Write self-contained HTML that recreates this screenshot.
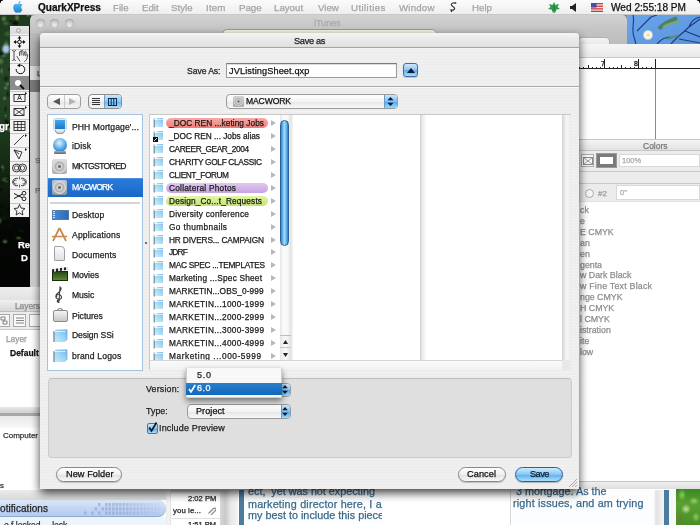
<!DOCTYPE html>
<html><head><meta charset="utf-8">
<style>
*{margin:0;padding:0;box-sizing:border-box}
html,body{width:700px;height:525px;overflow:hidden;background:#8a8a8a;font-family:"Liberation Sans",sans-serif;color:#000}
.a{position:absolute}
.t{position:absolute;white-space:nowrap;line-height:1;-webkit-text-stroke:.25px currentColor;will-change:transform}
</style></head><body>
<div class="a" style="left:0;top:0;width:700px;height:525px;overflow:hidden">

<!-- desktop left photo -->
<div class="a" style="left:0px;top:15px;width:31px;height:272px;background:radial-gradient(ellipse 5px 6px at 6px 34px,#a8c4e8 40%,transparent),radial-gradient(ellipse 3.8px 3.9px at 6.2px 63.7px,rgba(14,26,12,.9),transparent),radial-gradient(ellipse 2.7px 2.1px at 28.2px 0.2px,rgba(120,160,96,.75),transparent),radial-gradient(ellipse 3.6px 2.1px at 18.5px 223.0px,rgba(66,110,52,.9),transparent),radial-gradient(ellipse 4.3px 3.1px at 13.5px 106.0px,rgba(4,8,4,.85),transparent),radial-gradient(ellipse 2.5px 4.2px at 13.5px 175.9px,rgba(14,26,12,.9),transparent),radial-gradient(ellipse 3.4px 1.9px at 3.0px 167.2px,rgba(8,16,8,.9),transparent),radial-gradient(ellipse 3.3px 4.0px at 6.2px 28.8px,rgba(80,126,62,.9),transparent),radial-gradient(ellipse 1.5px 3.1px at 11.1px 29.9px,rgba(4,8,4,.85),transparent),radial-gradient(ellipse 1.6px 1.7px at 10.0px 114.5px,rgba(96,140,76,.85),transparent),radial-gradient(ellipse 2.4px 1.9px at 11.9px 186.8px,rgba(96,140,76,.85),transparent),radial-gradient(ellipse 3.6px 2.3px at 24.2px 158.1px,rgba(96,140,76,.85),transparent),radial-gradient(ellipse 1.6px 1.9px at 20.3px 206.1px,rgba(4,8,4,.85),transparent),radial-gradient(ellipse 3.8px 3.2px at 2.2px 203.7px,rgba(14,26,12,.9),transparent),radial-gradient(ellipse 3.9px 4.1px at 15.3px 63.4px,rgba(80,126,62,.9),transparent),radial-gradient(ellipse 4.4px 3.5px at 7.6px 18.9px,rgba(66,110,52,.9),transparent),radial-gradient(ellipse 2.4px 1.9px at 24.2px 111.1px,rgba(66,110,52,.9),transparent),radial-gradient(ellipse 3.2px 1.9px at 9.5px 210.0px,rgba(8,16,8,.9),transparent),radial-gradient(ellipse 3.4px 3.7px at 13.1px 82.3px,rgba(4,8,4,.85),transparent),radial-gradient(ellipse 3.4px 2.8px at 5.0px 226.6px,rgba(80,126,62,.9),transparent),radial-gradient(ellipse 3.9px 1.8px at 16.5px 92.5px,rgba(120,160,96,.75),transparent),radial-gradient(ellipse 2.0px 3.0px at 19.9px 102.6px,rgba(8,16,8,.9),transparent),radial-gradient(ellipse 1.6px 4.0px at 1.6px 56.0px,rgba(96,140,76,.85),transparent),radial-gradient(ellipse 4.3px 1.7px at 7.3px 164.8px,rgba(8,16,8,.9),transparent),radial-gradient(ellipse 3.2px 4.3px at 1.0px 39.0px,rgba(4,8,4,.85),transparent),radial-gradient(ellipse 2.9px 3.5px at 30.2px 99.0px,rgba(96,140,76,.85),transparent),radial-gradient(ellipse 4.3px 3.4px at 5.1px 165.1px,rgba(80,126,62,.9),transparent),radial-gradient(ellipse 2.3px 3.7px at 21.1px 162.5px,rgba(120,160,96,.75),transparent),radial-gradient(ellipse 3.4px 4.2px at 0.8px 46.2px,rgba(96,140,76,.85),transparent),radial-gradient(ellipse 3.7px 2.0px at 10.1px 180.6px,rgba(8,16,8,.9),transparent),radial-gradient(ellipse 4.0px 2.0px at 21.3px 215.7px,rgba(14,26,12,.9),transparent),radial-gradient(ellipse 4.3px 2.6px at 1.0px 154.6px,rgba(14,26,12,.9),transparent),radial-gradient(ellipse 4.0px 3.8px at 4.7px 202.5px,rgba(14,26,12,.9),transparent),radial-gradient(ellipse 2.6px 2.7px at 5.9px 106.2px,rgba(8,16,8,.9),transparent),radial-gradient(ellipse 4.3px 2.5px at 0.0px 174.9px,rgba(4,8,4,.85),transparent),radial-gradient(ellipse 4.2px 2.9px at 5.8px 8.5px,rgba(66,110,52,.9),transparent),radial-gradient(ellipse 2.0px 1.7px at 18.4px 119.0px,rgba(4,8,4,.85),transparent),radial-gradient(ellipse 2.8px 4.1px at 11.1px 166.2px,rgba(4,8,4,.85),transparent),radial-gradient(ellipse 3.9px 2.6px at 10.3px 54.1px,rgba(14,26,12,.9),transparent),radial-gradient(ellipse 3.4px 2.6px at 15.2px 209.6px,rgba(4,8,4,.85),transparent),radial-gradient(ellipse 3.7px 1.8px at 29.3px 195.1px,rgba(8,16,8,.9),transparent),radial-gradient(ellipse 3.1px 2.7px at 10.0px 110.5px,rgba(8,16,8,.9),transparent),radial-gradient(ellipse 2.2px 4.1px at 2.8px 153.6px,rgba(66,110,52,.9),transparent),radial-gradient(ellipse 3.5px 1.8px at 12.1px 104.3px,rgba(96,140,76,.85),transparent),radial-gradient(ellipse 3.9px 4.1px at 23.3px 58.5px,rgba(8,16,8,.9),transparent),radial-gradient(ellipse 2.3px 3.2px at 21.0px 130.8px,rgba(80,126,62,.9),transparent),radial-gradient(ellipse 1.9px 2.4px at 11.0px 112.6px,rgba(8,16,8,.9),transparent),radial-gradient(ellipse 1.8px 3.6px at 27.2px 170.7px,rgba(66,110,52,.9),transparent),radial-gradient(ellipse 1.7px 3.2px at 20.5px 127.8px,rgba(14,26,12,.9),transparent),radial-gradient(ellipse 1.7px 2.1px at 5.7px 100.7px,rgba(80,126,62,.9),transparent),radial-gradient(ellipse 4.5px 3.6px at 29.5px 148.5px,rgba(8,16,8,.9),transparent),radial-gradient(ellipse 4.0px 2.2px at 12.6px 15.8px,rgba(96,140,76,.85),transparent),radial-gradient(ellipse 2.5px 2.8px at 24.5px 188.5px,rgba(8,16,8,.9),transparent),radial-gradient(ellipse 1.7px 2.2px at 10.3px 114.5px,rgba(96,140,76,.85),transparent),radial-gradient(ellipse 2.9px 3.1px at 14.6px 149.1px,rgba(8,16,8,.9),transparent),radial-gradient(ellipse 3.8px 3.2px at 2.0px 190.9px,rgba(4,8,4,.85),transparent),radial-gradient(ellipse 2.1px 2.4px at 14.7px 193.5px,rgba(4,8,4,.85),transparent),radial-gradient(ellipse 3.4px 4.1px at 17.8px 98.4px,rgba(4,8,4,.85),transparent),radial-gradient(ellipse 1.5px 3.8px at 21.3px 127.2px,rgba(80,126,62,.9),transparent),radial-gradient(ellipse 1.9px 1.5px at 10.8px 6.1px,rgba(4,8,4,.85),transparent),radial-gradient(ellipse 3.3px 3.7px at 3.9px 3.7px,rgba(120,160,96,.75),transparent),radial-gradient(ellipse 4.1px 4.2px at 14.7px 139.8px,rgba(4,8,4,.85),transparent),radial-gradient(ellipse 4.5px 2.4px at 15.2px 8.5px,rgba(4,8,4,.85),transparent),radial-gradient(ellipse 2.2px 2.9px at 12.2px 31.4px,rgba(120,160,96,.75),transparent),radial-gradient(ellipse 2.2px 1.6px at 3.8px 109.7px,rgba(14,26,12,.9),transparent),radial-gradient(ellipse 3.0px 2.4px at 7.8px 69.2px,rgba(120,160,96,.75),transparent),radial-gradient(ellipse 3.3px 3.7px at 29.8px 87.3px,rgba(4,8,4,.85),transparent),radial-gradient(ellipse 2.4px 4.4px at 13.3px 129.8px,rgba(14,26,12,.9),transparent),radial-gradient(ellipse 2.5px 4.1px at 0.0px 205.5px,rgba(80,126,62,.9),transparent),radial-gradient(ellipse 3.3px 2.6px at 17.5px 137.1px,rgba(8,16,8,.9),transparent),radial-gradient(ellipse 2.6px 1.9px at 12.7px 29.7px,rgba(4,8,4,.85),transparent),radial-gradient(ellipse 2.4px 2.6px at 9.2px 69.3px,rgba(4,8,4,.85),transparent),radial-gradient(ellipse 4.4px 3.1px at 12.7px 64.1px,rgba(120,160,96,.75),transparent),radial-gradient(ellipse 1.5px 2.7px at 2.2px 152.4px,rgba(120,160,96,.75),transparent),radial-gradient(ellipse 2.7px 2.6px at 5.6px 73.0px,rgba(96,140,76,.85),transparent),radial-gradient(ellipse 1.7px 1.9px at 30.6px 165.2px,rgba(8,16,8,.9),transparent),radial-gradient(ellipse 3.8px 2.0px at 13.7px 36.8px,rgba(8,16,8,.9),transparent),radial-gradient(ellipse 3.7px 1.6px at 29.0px 118.8px,rgba(120,160,96,.75),transparent),radial-gradient(ellipse 3.4px 4.3px at 22.3px 159.0px,rgba(8,16,8,.9),transparent),radial-gradient(ellipse 4.3px 2.9px at 16.4px 119.2px,rgba(120,160,96,.75),transparent),radial-gradient(ellipse 4.4px 4.4px at 28.6px 93.9px,rgba(66,110,52,.9),transparent),radial-gradient(ellipse 2.5px 4.3px at 24.7px 148.9px,rgba(4,8,4,.85),transparent),radial-gradient(ellipse 2.9px 4.0px at 17.0px 2.7px,rgba(120,160,96,.75),transparent),radial-gradient(ellipse 3.4px 3.2px at 22.2px 225.6px,rgba(14,26,12,.9),transparent),radial-gradient(ellipse 4.0px 2.3px at 11.3px 174.7px,rgba(14,26,12,.9),transparent),radial-gradient(ellipse 3.6px 3.5px at 2.0px 115.6px,rgba(14,26,12,.9),transparent),radial-gradient(ellipse 3.0px 3.1px at 10.5px 114.8px,rgba(120,160,96,.75),transparent),radial-gradient(ellipse 4.4px 3.4px at 3.5px 207.4px,rgba(4,8,4,.85),transparent),radial-gradient(ellipse 2.3px 2.9px at 15.1px 104.3px,rgba(14,26,12,.9),transparent),radial-gradient(ellipse 4.1px 4.4px at 9.1px 194.3px,rgba(4,8,4,.85),transparent),radial-gradient(ellipse 2.8px 1.9px at 27.8px 30.5px,rgba(80,126,62,.9),transparent),radial-gradient(ellipse 4.4px 3.2px at 15.3px 7.5px,rgba(8,16,8,.9),transparent),radial-gradient(ellipse 1.7px 4.2px at 7.8px 79.1px,rgba(8,16,8,.9),transparent),radial-gradient(ellipse 1.6px 3.7px at 30.6px 11.2px,rgba(14,26,12,.9),transparent),radial-gradient(ellipse 4.5px 2.0px at 2.4px 40.8px,rgba(120,160,96,.75),transparent),radial-gradient(ellipse 2.4px 2.5px at 4.6px 83.4px,rgba(96,140,76,.85),transparent),radial-gradient(ellipse 2.1px 3.0px at 26.7px 183.4px,rgba(96,140,76,.85),transparent),radial-gradient(ellipse 1.8px 3.7px at 11.0px 79.2px,rgba(14,26,12,.9),transparent),radial-gradient(ellipse 4.3px 4.3px at 29.6px 143.5px,rgba(80,126,62,.9),transparent),radial-gradient(ellipse 2.9px 3.6px at 11.4px 181.2px,rgba(8,16,8,.9),transparent),radial-gradient(ellipse 4.0px 1.6px at 29.1px 58.9px,rgba(14,26,12,.9),transparent),radial-gradient(ellipse 2.9px 2.0px at 14.9px 188.3px,rgba(14,26,12,.9),transparent),radial-gradient(ellipse 2.5px 2.4px at 18.2px 188.0px,rgba(4,8,4,.85),transparent),radial-gradient(ellipse 2.3px 2.5px at 11.2px 68.7px,rgba(80,126,62,.9),transparent),radial-gradient(ellipse 4.4px 4.2px at 21.0px 124.0px,rgba(80,126,62,.9),transparent),radial-gradient(ellipse 2.4px 4.4px at 29.8px 177.9px,rgba(80,126,62,.9),transparent),radial-gradient(ellipse 4.4px 1.5px at 19.1px 31.9px,rgba(96,140,76,.85),transparent),radial-gradient(ellipse 2.0px 3.9px at 5.6px 93.9px,rgba(14,26,12,.9),transparent),radial-gradient(ellipse 2.2px 3.7px at 7.6px 107.9px,rgba(4,8,4,.85),transparent),radial-gradient(ellipse 4.2px 1.8px at 24.1px 193.3px,rgba(8,16,8,.9),transparent),radial-gradient(ellipse 3.5px 3.1px at 23.0px 143.3px,rgba(4,8,4,.85),transparent),linear-gradient(#1e3a1c,#26462a 25%,#1c381a 45%,#0e1a0e 65%,#050705 78%,#030403)"></div>
<div class="t" style="left:-1px;top:121.5px;font-size:10px;color:#fff;font-weight:bold">gr</div>
<div class="t" style="left:18px;top:240px;font-size:9.5px;color:#fff;font-weight:bold">Re</div>
<div class="t" style="left:21px;top:253px;font-size:9.5px;color:#fff;font-weight:bold">D</div>
<svg class="a" style="left:627px;top:15px" width="73" height="29" viewBox="0 0 73 29"><defs><linearGradient id="sky" x1="0" y1="0" x2="1" y2="1"><stop offset="0" stop-color="#6aa4ea"/><stop offset="1" stop-color="#5a94dc"/></linearGradient><radialGradient id="flw"><stop offset="0" stop-color="#f0c040"/><stop offset=".3" stop-color="#fff4d0"/><stop offset=".7" stop-color="#f4f4f0"/><stop offset="1" stop-color="#c8d8f0" stop-opacity="0"/></radialGradient></defs><rect width="73" height="29" fill="url(#sky)"/><path d="M6 0C8 6 4 14 7 22M7 22L9 29M10 16L24 2M24 2L30 0" stroke="#1c3c84" stroke-width="1.1" fill="none"/><path d="M32 14C36 8 44 6 50 3" stroke="#4a7a4a" stroke-width="4" fill="none" opacity=".85"/><path d="M36 12C40 9 46 8 52 6" stroke="#7aaa6a" stroke-width="2" fill="none"/><path d="M44 29C50 22 56 18 62 12L73 4M58 16L73 22M62 12C64 6 68 3 73 2M52 24L73 28M30 29C34 24 40 22 44 22" stroke="#1c3c84" stroke-width="1.2" fill="none"/><path d="M40 24C44 22 48 22 52 20" stroke="#5a8a58" stroke-width="2.5" opacity=".7"/><circle cx="21" cy="20" r="5.5" fill="url(#flw)"/></svg>
<div class="a" style="left:30px;top:15px;width:597px;height:30px;background:linear-gradient(#d2d2d2,#c4c4c4 50%,#bcbcbc);border-radius:5px 5px 0 0"></div>
<div class="t" style="left:314px;top:19px;font-size:9px;color:#a8a8a8">iTunes</div>
<div class="a" style="left:35.8px;top:18.5px;width:9px;height:9px;border-radius:50%;background:radial-gradient(circle at 50% 70%,#eeeeee,#c4c4c4 60%,#9a9a9a);box-shadow:inset 0 0 1px #888"></div>
<div class="a" style="left:50.1px;top:18.5px;width:9px;height:9px;border-radius:50%;background:radial-gradient(circle at 50% 70%,#eeeeee,#c4c4c4 60%,#9a9a9a);box-shadow:inset 0 0 1px #888"></div>
<div class="a" style="left:64.5px;top:18.5px;width:9px;height:9px;border-radius:50%;background:radial-gradient(circle at 50% 70%,#eeeeee,#c4c4c4 60%,#9a9a9a);box-shadow:inset 0 0 1px #888"></div>
<div class="a" style="left:222px;top:29px;width:215px;height:8px;border-radius:5px 5px 0 0;background:#f4f2dc;border:1px solid #9c9c90"></div>
<div class="a" style="left:578px;top:37px;width:32px;height:10px;border-radius:4px 4px 0 0;background:linear-gradient(#f4f4f4,#e6e6e6);border:1px solid #b0b0b0"></div>
<div class="a" style="left:30px;top:33px;width:10px;height:460px;background:linear-gradient(90deg,#c8c8c8,#dedede 60%,#b8b8b8)"></div>
<div class="a" style="left:30px;top:33px;width:10px;height:33px;background:linear-gradient(#bcbcbc,#a8a8a8)"></div>
<div class="a" style="left:30px;top:66px;width:10px;height:14px;background:#dadada"></div>
<div class="t" style="left:36.5px;top:69.5px;font-size:8px;color:#444">L</div>
<div class="a" style="left:30px;top:80px;width:10px;height:12px;background:#7a7a7a"></div>
<div class="t" style="left:35px;top:157px;font-size:8px;color:#777">S</div>
<div class="t" style="left:35px;top:187px;font-size:8px;color:#777">P</div>
<div class="a" style="left:579px;top:44px;width:121px;height:446px;background:#fff"></div>
<div class="a" style="left:579px;top:44px;width:121px;height:14px;background:linear-gradient(#f6f6f6,#e8e8e8);border-bottom:1px solid #c8c8c8"></div>
<div class="a" style="left:579px;top:58px;width:121px;height:11px;background:#fff;border-bottom:1px solid #222"></div>
<div class="a" style="left:579.2px;top:66.5px;width:0.9px;height:2.5px;background:#222"></div>
<div class="a" style="left:583.4px;top:66.5px;width:0.9px;height:2.5px;background:#222"></div>
<div class="a" style="left:587.6px;top:65px;width:0.9px;height:4px;background:#222"></div>
<div class="a" style="left:591.8px;top:66.5px;width:0.9px;height:2.5px;background:#222"></div>
<div class="a" style="left:596.0px;top:66.5px;width:0.9px;height:2.5px;background:#222"></div>
<div class="a" style="left:600.2px;top:66.5px;width:0.9px;height:2.5px;background:#222"></div>
<div class="a" style="left:604.4px;top:59px;width:0.9px;height:10px;background:#222"></div>
<div class="a" style="left:608.6px;top:66.5px;width:0.9px;height:2.5px;background:#222"></div>
<div class="a" style="left:612.8px;top:66.5px;width:0.9px;height:2.5px;background:#222"></div>
<div class="a" style="left:617.0px;top:66.5px;width:0.9px;height:2.5px;background:#222"></div>
<div class="a" style="left:621.2px;top:65px;width:0.9px;height:4px;background:#222"></div>
<div class="a" style="left:625.4px;top:66.5px;width:0.9px;height:2.5px;background:#222"></div>
<div class="a" style="left:629.6px;top:66.5px;width:0.9px;height:2.5px;background:#222"></div>
<div class="a" style="left:633.8px;top:66.5px;width:0.9px;height:2.5px;background:#222"></div>
<div class="a" style="left:638.0px;top:59px;width:0.9px;height:10px;background:#222"></div>
<div class="a" style="left:642.2px;top:66.5px;width:0.9px;height:2.5px;background:#222"></div>
<div class="a" style="left:646.4px;top:66.5px;width:0.9px;height:2.5px;background:#222"></div>
<div class="a" style="left:650.6px;top:66.5px;width:0.9px;height:2.5px;background:#222"></div>
<div class="a" style="left:654.8px;top:65px;width:0.9px;height:4px;background:#222"></div>
<div class="a" style="left:655.2px;top:59px;width:1px;height:10px;background:#222"></div>
<div class="t" style="left:600.8px;top:60px;font-size:7px;color:#111">7</div>
<div class="t" style="left:634px;top:60px;font-size:7px;color:#111">8</div>
<div class="a" style="left:655.2px;top:69px;width:0.8px;height:70px;background:#8a8a8a"></div>
<div class="a" style="left:579px;top:139px;width:121px;height:350px;background:#fff"></div>
<div class="a" style="left:579px;top:139px;width:121px;height:12px;background:linear-gradient(#f3f3f3,#e2e2e2);border-top:1px solid #c8c8c8;border-bottom:1px solid #c4c4c4"></div>
<div class="t" style="left:643px;top:141.5px;font-size:8.5px;color:#777">Colors</div>
<div class="a" style="left:579px;top:151px;width:121px;height:50px;background:#ececec"></div>
<div class="a" style="left:581px;top:154px;width:13px;height:13px;background:#f8f8f8;border:1px solid #aaa"></div>
<svg class="a" style="left:583px;top:157px" width="10" height="8" viewBox="0 0 10 8"><rect x=".5" y=".5" width="9" height="7" fill="none" stroke="#888"/><path d="M.5 .5L9.5 7.5M9.5 .5L.5 7.5" stroke="#888" stroke-width=".8"/></svg>
<div class="a" style="left:597px;top:154px;width:19px;height:13px;background:#fff;border:3px solid #7a7a7a;box-shadow:0 0 0 1px #999"></div>
<div class="a" style="left:619px;top:154px;width:81px;height:13px;background:#fff;border:1px solid #d8d8d8"></div>
<div class="t" style="left:622px;top:157px;font-size:7.5px;color:#aaa">100%</div>
<div class="a" style="left:579px;top:171px;width:121px;height:1px;background:#c8c8c8"></div>
<div class="a" style="left:579px;top:183px;width:121px;height:1px;background:#c8c8c8"></div>
<div class="a" style="left:585px;top:189px;width:9px;height:9px;border-radius:50%;border:1px solid #aaa;background:#f4f4f4"></div>
<div class="t" style="left:598px;top:190px;font-size:8px;color:#999">#2</div>
<div class="a" style="left:616px;top:185px;width:84px;height:15px;background:#fff;border:1px solid #d8d8d8"></div>
<div class="t" style="left:620px;top:189px;font-size:7.5px;color:#aaa">0"</div>
<div class="a" style="left:579px;top:201px;width:121px;height:1px;background:#e2e2e2"></div>
<div class="t" style="left:579.5px;top:205.76px;font-size:8.8px;color:#8e8e8e">ck</div>
<div class="t" style="left:579.5px;top:216.71px;font-size:8.8px;color:#8e8e8e">e</div>
<div class="t" style="left:579.5px;top:227.66px;font-size:8.8px;color:#8e8e8e">E CMYK</div>
<div class="t" style="left:579.5px;top:238.61px;font-size:8.8px;color:#8e8e8e">an</div>
<div class="t" style="left:579.5px;top:249.56px;font-size:8.8px;color:#8e8e8e">en</div>
<div class="t" style="left:579.5px;top:260.51px;font-size:8.8px;color:#8e8e8e">genta</div>
<div class="t" style="left:579.5px;top:271.46px;font-size:8.8px;color:#8e8e8e">w Dark Black</div>
<div class="t" style="left:579.5px;top:282.41px;font-size:8.8px;letter-spacing:0.231px;color:#8e8e8e">w Fine Text Black</div>
<div class="t" style="left:579.5px;top:293.36px;font-size:8.8px;color:#8e8e8e">nge CMYK</div>
<div class="t" style="left:579.5px;top:304.31px;font-size:8.8px;color:#8e8e8e">H CMYK</div>
<div class="t" style="left:579.5px;top:315.26px;font-size:8.8px;color:#8e8e8e">l CMYK</div>
<div class="t" style="left:579.5px;top:326.21px;font-size:8.8px;color:#8e8e8e">istration</div>
<div class="t" style="left:579.5px;top:337.16px;font-size:8.8px;color:#8e8e8e">ite</div>
<div class="t" style="left:579.5px;top:348.11px;font-size:8.8px;color:#8e8e8e">low</div>
<div class="a" style="left:579px;top:481px;width:121px;height:9px;background:linear-gradient(#eeeeee,#dcdcdc);border-top:1px solid #c4c4c4"></div>
<div class="a" style="left:0px;top:287px;width:31px;height:2px;background:#cfcfcf"></div>
<div class="a" style="left:0px;top:287px;width:40px;height:124px;background:#fff"></div>
<div class="a" style="left:0px;top:287px;width:40px;height:13px;background:linear-gradient(#eeeeee,#e2e2e2)"></div>
<div class="a" style="left:0px;top:300px;width:40px;height:12px;background:linear-gradient(#f0f0f0,#d8d8d8);border-bottom:1px solid #bdbdbd"></div>
<div class="t" style="left:15px;top:301.5px;font-size:8.3px;color:#888">Layers</div>
<div class="a" style="left:0px;top:312px;width:40px;height:18px;background:#ececec;border-bottom:1px solid #c8c8c8"></div>
<div class="a" style="left:-3px;top:314px;width:13px;height:13px;border:1px solid #aaa;background:#f8f8f8"></div>
<div class="a" style="left:13px;top:314px;width:13px;height:13px;border:1px solid #aaa;background:#f8f8f8"></div>
<div class="a" style="left:29px;top:314px;width:13px;height:13px;border:1px solid #aaa;background:#f8f8f8"></div>
<svg class="a" style="left:16px;top:317px" width="8" height="7" viewBox="0 0 8 7"><path d="M0 1h8M0 3.5h8M0 6h8" stroke="#666" stroke-width=".8"/></svg>
<svg class="a" style="left:0px;top:316px" width="8" height="9" viewBox="0 0 8 9"><path d="M1 1h4v3h-4zM3 5h4v3h-4z" stroke="#666" stroke-width=".8" fill="none"/></svg>
<div class="t" style="left:6px;top:335px;font-size:8.3px;color:#999">Layer</div>
<div class="t" style="left:10px;top:349px;font-size:8.5px;color:#111;font-weight:bold">Default</div>
<div class="a" style="left:0px;top:407px;width:40px;height:6px;background:linear-gradient(#e8e8e8,#d0d0d0)"></div>
<div class="a" style="left:0px;top:413px;width:40px;height:3px;background:#a8a8a8"></div>
<div class="a" style="left:0px;top:416px;width:40px;height:12px;background:linear-gradient(#e8e8e8,#f8f8f8)"></div>
<div class="a" style="left:0px;top:428px;width:40px;height:62px;background:#fff"></div>
<div class="t" style="left:3px;top:432.14px;font-size:8px;letter-spacing:-0.018px;color:#333">Computer</div>
<div class="t" style="left:0px;top:482px;font-size:7.8px;color:#333">s</div>
<div class="a" style="left:0px;top:489px;width:700px;height:36px;background:#fff"></div>
<div class="a" style="left:0px;top:490px;width:172px;height:10px;background:linear-gradient(#ebebeb,#d8d8d8)"></div>
<div class="a" style="left:0px;top:500px;width:166px;height:17px;border-radius:0 8px 8px 0;background:linear-gradient(#dfeafa,#c2d6f4 50%,#b4ccef);border-bottom:1px solid #90a8d0"></div>
<svg class="a" style="left:84px;top:502.5px" width="78" height="13" viewBox="0 0 78 13"><rect x="0.0" y="8.4" width="2.6" height="3.3" fill="#8a9ccc" fill-opacity="0.55"/><rect x="7.0" y="8.4" width="2.6" height="3.3" fill="#8a9ccc" fill-opacity="0.55"/><rect x="10.5" y="4.2" width="2.6" height="3.3" fill="#8a9ccc" fill-opacity="0.55"/><rect x="14.0" y="0.0" width="2.6" height="3.3" fill="#8a9ccc" fill-opacity="0.55"/><rect x="14.0" y="8.4" width="2.6" height="3.3" fill="#8a9ccc" fill-opacity="0.55"/><rect x="17.5" y="4.2" width="2.6" height="3.3" fill="#8a9ccc" fill-opacity="0.55"/><rect x="21.0" y="0.0" width="2.6" height="3.3" fill="#8a9ccc" fill-opacity="0.55"/><rect x="21.0" y="4.2" width="2.6" height="3.3" fill="#8a9ccc" fill-opacity="0.55"/><rect x="21.0" y="8.4" width="2.6" height="3.3" fill="#8a9ccc" fill-opacity="0.55"/><rect x="24.5" y="0.0" width="2.6" height="3.3" fill="#8a9ccc" fill-opacity="0.55"/><rect x="24.5" y="4.2" width="2.6" height="3.3" fill="#8a9ccc" fill-opacity="0.55"/><rect x="24.5" y="8.4" width="2.6" height="3.3" fill="#8a9ccc" fill-opacity="0.55"/><rect x="28.0" y="0.0" width="2.6" height="3.3" fill="#8a9ccc" fill-opacity="0.55"/><rect x="28.0" y="4.2" width="2.6" height="3.3" fill="#8a9ccc" fill-opacity="0.55"/><rect x="28.0" y="8.4" width="2.6" height="3.3" fill="#8a9ccc" fill-opacity="0.55"/><rect x="31.5" y="0.0" width="2.6" height="3.3" fill="#8a9ccc" fill-opacity="0.55"/><rect x="31.5" y="4.2" width="2.6" height="3.3" fill="#8a9ccc" fill-opacity="0.55"/><rect x="31.5" y="8.4" width="2.6" height="3.3" fill="#8a9ccc" fill-opacity="0.55"/><rect x="35.0" y="0.0" width="2.6" height="3.3" fill="#8a9ccc" fill-opacity="0.55"/><rect x="35.0" y="4.2" width="2.6" height="3.3" fill="#8a9ccc" fill-opacity="0.55"/><rect x="35.0" y="8.4" width="2.6" height="3.3" fill="#8a9ccc" fill-opacity="0.55"/><rect x="38.5" y="0.0" width="2.6" height="3.3" fill="#8a9ccc" fill-opacity="0.51"/><rect x="38.5" y="4.2" width="2.6" height="3.3" fill="#8a9ccc" fill-opacity="0.51"/><rect x="38.5" y="8.4" width="2.6" height="3.3" fill="#8a9ccc" fill-opacity="0.51"/><rect x="42.0" y="0.0" width="2.6" height="3.3" fill="#8a9ccc" fill-opacity="0.47"/><rect x="42.0" y="4.2" width="2.6" height="3.3" fill="#8a9ccc" fill-opacity="0.47"/><rect x="42.0" y="8.4" width="2.6" height="3.3" fill="#8a9ccc" fill-opacity="0.47"/><rect x="45.5" y="0.0" width="2.6" height="3.3" fill="#8a9ccc" fill-opacity="0.43"/><rect x="45.5" y="4.2" width="2.6" height="3.3" fill="#8a9ccc" fill-opacity="0.43"/><rect x="45.5" y="8.4" width="2.6" height="3.3" fill="#8a9ccc" fill-opacity="0.43"/><rect x="49.0" y="0.0" width="2.6" height="3.3" fill="#8a9ccc" fill-opacity="0.39"/><rect x="49.0" y="4.2" width="2.6" height="3.3" fill="#8a9ccc" fill-opacity="0.39"/><rect x="49.0" y="8.4" width="2.6" height="3.3" fill="#8a9ccc" fill-opacity="0.39"/><rect x="52.5" y="0.0" width="2.6" height="3.3" fill="#8a9ccc" fill-opacity="0.35"/><rect x="52.5" y="4.2" width="2.6" height="3.3" fill="#8a9ccc" fill-opacity="0.35"/><rect x="52.5" y="8.4" width="2.6" height="3.3" fill="#8a9ccc" fill-opacity="0.35"/><rect x="56.0" y="0.0" width="2.6" height="3.3" fill="#8a9ccc" fill-opacity="0.31"/><rect x="56.0" y="4.2" width="2.6" height="3.3" fill="#8a9ccc" fill-opacity="0.31"/><rect x="56.0" y="8.4" width="2.6" height="3.3" fill="#8a9ccc" fill-opacity="0.31"/><rect x="59.5" y="0.0" width="2.6" height="3.3" fill="#8a9ccc" fill-opacity="0.27"/><rect x="59.5" y="4.2" width="2.6" height="3.3" fill="#8a9ccc" fill-opacity="0.27"/><rect x="59.5" y="8.4" width="2.6" height="3.3" fill="#8a9ccc" fill-opacity="0.27"/><rect x="63.0" y="0.0" width="2.6" height="3.3" fill="#8a9ccc" fill-opacity="0.23"/><rect x="63.0" y="4.2" width="2.6" height="3.3" fill="#8a9ccc" fill-opacity="0.23"/><rect x="63.0" y="8.4" width="2.6" height="3.3" fill="#8a9ccc" fill-opacity="0.23"/><rect x="66.5" y="0.0" width="2.6" height="3.3" fill="#8a9ccc" fill-opacity="0.19"/><rect x="66.5" y="4.2" width="2.6" height="3.3" fill="#8a9ccc" fill-opacity="0.19"/><rect x="66.5" y="8.4" width="2.6" height="3.3" fill="#8a9ccc" fill-opacity="0.19"/><rect x="70.0" y="0.0" width="2.6" height="3.3" fill="#8a9ccc" fill-opacity="0.15"/><rect x="70.0" y="4.2" width="2.6" height="3.3" fill="#8a9ccc" fill-opacity="0.15"/><rect x="70.0" y="8.4" width="2.6" height="3.3" fill="#8a9ccc" fill-opacity="0.15"/><rect x="73.5" y="0.0" width="2.6" height="3.3" fill="#8a9ccc" fill-opacity="0.11"/><rect x="73.5" y="4.2" width="2.6" height="3.3" fill="#8a9ccc" fill-opacity="0.11"/><rect x="73.5" y="8.4" width="2.6" height="3.3" fill="#8a9ccc" fill-opacity="0.11"/></svg>
<div class="t" style="left:0px;top:503.98px;font-size:10px;letter-spacing:0.068px;color:#222">otifications</div>
<div class="a" style="left:0px;top:517px;width:166px;height:8px;background:#eef4fc"></div>
<div class="t" style="left:4px;top:521px;font-size:8.5px;color:#333">o f locked ... lock</div>
<div class="a" style="left:166px;top:490px;width:6px;height:35px;background:linear-gradient(90deg,#ececec,#f4f4f4 60%,#c8c8c8)"></div>
<div class="a" style="left:171px;top:490px;width:49px;height:35px;background:#fff"></div>
<div class="a" style="left:171px;top:490px;width:49px;height:4px;background:linear-gradient(#c8c8c8,#fff)"></div>
<div class="t" style="left:188px;top:495.34px;font-size:7.6px;letter-spacing:0.020px;color:#222">2:02 PM</div>
<div class="t" style="left:173px;top:507.24px;font-size:7.8px;letter-spacing:0.086px;color:#222">you le...</div>
<svg class="a" style="left:207px;top:506px" width="9" height="9" viewBox="0 0 9 9"><path d="M1.5 7.5L6.5 2.5a1.4 1.4 0 0 1 2 2L4 9" stroke="#888" stroke-width="1.1" fill="none"/></svg>
<div class="a" style="left:172px;top:518px;width:48px;height:1px;background:#e0e0e0"></div>
<div class="t" style="left:188px;top:521px;font-size:7.5px;color:#222">1:51 PM</div>
<div class="a" style="left:220px;top:490px;width:18px;height:35px;background:linear-gradient(90deg,#d8d8d8,#c8c8c8 30%,#e8e8e8 60%,#f4f4f4)"></div>
<div class="a" style="left:239px;top:490px;width:4.7px;height:35px;background:#4c7c9e"></div>
<div class="a" style="left:244px;top:490px;width:138px;height:35px;background:#fcfdfe"></div>
<div class="t" style="left:248.3px;top:486.49px;font-size:10.8px;letter-spacing:-0.009px;color:#3a6888">ect,&nbsp; yet was not expecting</div>
<div class="t" style="left:248.3px;top:498.59px;font-size:10.8px;letter-spacing:0.173px;color:#3a6888">marketing director here, I a</div>
<div class="t" style="left:248.3px;top:510.49px;font-size:10.8px;letter-spacing:0.013px;color:#3a6888">my best to include this piece</div>
<div class="a" style="left:382px;top:490px;width:128px;height:35px;background:#fff"></div>
<div class="a" style="left:510px;top:490px;width:1px;height:35px;background:#d8d8d8"></div>
<div class="a" style="left:513px;top:490px;width:141px;height:35px;background:#fcfdfe;overflow:hidden"></div>
<div class="t" style="left:515.7px;top:486.49px;font-size:10.8px;color:#3a6888">3 mortgage. As the</div>
<div class="t" style="left:512.5px;top:498.49px;font-size:10.8px;letter-spacing:0.168px;color:#3a6888">right issues, and am trying</div>
<div class="a" style="left:654px;top:490px;width:10px;height:35px;background:linear-gradient(90deg,#fafafa,#e2e2e2 20%,#f4f4f4)"></div>
<div class="a" style="left:664px;top:490px;width:4.7px;height:35px;background:#4c7c9e"></div>
<div class="a" style="left:668.7px;top:490px;width:7.3px;height:35px;background:#f8f8fa"></div>
<div class="a" style="left:676px;top:489px;width:24px;height:36px;background:radial-gradient(ellipse 4px 6px at 6px 6px,#8acc60,transparent),radial-gradient(ellipse 5px 4px at 18px 12px,#9ad070,transparent),radial-gradient(ellipse 5px 5px at 10px 20px,#c8e0a0,transparent),radial-gradient(ellipse 4px 7px at 4px 30px,#6a7a30,transparent),radial-gradient(ellipse 4px 5px at 20px 28px,#90c860,transparent),linear-gradient(#3a8a22,#58a030 40%,#4a9028)"></div>
<div class="a" style="left:10px;top:26px;width:20px;height:191px;background:#f4f4f4;border-right:1px solid #111"></div>
<div class="a" style="left:10px;top:26px;width:19px;height:8px;background:linear-gradient(#e8e8e8,#d8d8d8)"></div>
<div class="a" style="left:16px;top:27.5px;width:5px;height:5px;border-radius:50%;border:1px solid #aaa"></div>
<div class="a" style="left:10px;top:34.5px;width:19px;height:1px;background:#c4c4c4"></div>
<div class="a" style="left:10px;top:48.5px;width:19px;height:1px;background:#c4c4c4"></div>
<div class="a" style="left:10px;top:62.5px;width:19px;height:1px;background:#c4c4c4"></div>
<div class="a" style="left:10px;top:76.5px;width:19px;height:1px;background:#c4c4c4"></div>
<div class="a" style="left:10px;top:90.5px;width:19px;height:1px;background:#c4c4c4"></div>
<div class="a" style="left:10px;top:104.5px;width:19px;height:1px;background:#c4c4c4"></div>
<div class="a" style="left:10px;top:118.5px;width:19px;height:1px;background:#c4c4c4"></div>
<div class="a" style="left:10px;top:132.5px;width:19px;height:1px;background:#c4c4c4"></div>
<div class="a" style="left:10px;top:146.5px;width:19px;height:1px;background:#c4c4c4"></div>
<div class="a" style="left:10px;top:160.5px;width:19px;height:1px;background:#c4c4c4"></div>
<div class="a" style="left:10px;top:174.5px;width:19px;height:1px;background:#c4c4c4"></div>
<div class="a" style="left:10px;top:188.5px;width:19px;height:1px;background:#c4c4c4"></div>
<div class="a" style="left:10px;top:202.5px;width:19px;height:1px;background:#c4c4c4"></div>
<div class="a" style="left:10px;top:76px;width:19px;height:14px;background:#8c8c8c"></div>
<svg class="a" style="left:10px;top:34.5px" width="19" height="14" viewBox="0 0 19 14"><path d="M9.5 2v10M4.5 7h10" stroke="#111" stroke-width="1"/><path d="M9.5 1l2 2.5h-4zM9.5 13l2-2.5h-4zM3.5 7l2.500-2v4zM15.5 7l-2.5-2v4z" fill="#111"/><circle cx="9.5" cy="7" r="1.8" fill="#f4f4f4" stroke="#111" stroke-width=".9"/></svg>
<svg class="a" style="left:10px;top:48.5px" width="19" height="14" viewBox="0 0 19 14"><path d="M2.2 1.5c1 0 1.600.400 1.800 1.200c.2-.8.800-1.200 1.800-1.200M4 2.700v7.600M2.200 11.500c1 0 1.600-.400 1.800-1.200c.2.800.800 1.200 1.800 1.200" stroke="#222" stroke-width=".8" fill="none"/><path d="M9.800 12L7 7.500M9.500 6.500V3Q9.800 1.800 10.800 2.300M11.200 6V1.800Q12 .900 12.800 1.700L13.300 6M14 6.300L14.800 2.600Q15.600 2 16.200 2.800L15.700 6.800M16.600 5.500Q17.400 4.800 17.800 5.800L16.800 10Q16 12 14.500 12.500" stroke="#222" stroke-width=".75" fill="none" stroke-linecap="round"/></svg>
<svg class="a" style="left:10px;top:62.5px" width="19" height="14" viewBox="0 0 19 14"><path d="M9 2.400A4.300 4.300 0 1 1 6.200 6" stroke="#111" stroke-width="1" fill="none"/><path d="M7 2.600L10.200 .600L10 4.300z" fill="#111"/></svg>
<svg class="a" style="left:10px;top:76.5px" width="19" height="14" viewBox="0 0 19 14"><circle cx="8" cy="6" r="3" fill="#fff"/><path d="M10 8l4 4" stroke="#111" stroke-width="1.8"/></svg>
<svg class="a" style="left:10px;top:90.5px" width="19" height="14" viewBox="0 0 19 14"><rect x="4" y="3.5" width="11" height="7" fill="none" stroke="#222" stroke-width=".9"/><path d="M7.5 9l2-5 2 5M8.3 7.500h2.500" stroke="#222" stroke-width=".8" fill="none"/><path d="M15 1l2 1.5-2 1.5z" fill="#111"/></svg>
<svg class="a" style="left:10px;top:104.5px" width="19" height="14" viewBox="0 0 19 14"><rect x="4" y="3.5" width="10" height="7" fill="none" stroke="#222" stroke-width=".9"/><path d="M4 3.5l10 7M14 3.5l-10 7" stroke="#222" stroke-width=".8"/><path d="M15 1l2 1.5-2 1.5z" fill="#111"/></svg>
<svg class="a" style="left:10px;top:118.5px" width="19" height="14" viewBox="0 0 19 14"><rect x="4" y="2.5" width="11" height="9" fill="none" stroke="#222" stroke-width=".9"/><path d="M4 5.500h11M4 8.500h11M7.7 2.500v9M11.3 2.500v9" stroke="#222" stroke-width=".8"/></svg>
<svg class="a" style="left:10px;top:132.5px" width="19" height="14" viewBox="0 0 19 14"><path d="M4 12L14 2" stroke="#222" stroke-width=".9"/><path d="M15 1l2 1.5-2 1.5z" fill="#111"/></svg>
<svg class="a" style="left:10px;top:146.5px" width="19" height="14" viewBox="0 0 19 14"><path d="M4 3l8 2-3 7zM4 3l5 4" stroke="#222" stroke-width=".9" fill="none"/><path d="M15 1l2 1.5-2 1.5z" fill="#111"/></svg>
<svg class="a" style="left:10px;top:160.5px" width="19" height="14" viewBox="0 0 19 14"><rect x="2.500" y="3" width="8" height="8" rx="4" fill="none" stroke="#222" stroke-width=".9"/><rect x="4.300" y="4.800" width="4.400" height="4.400" rx="2.200" fill="none" stroke="#222" stroke-width=".7"/><rect x="8.500" y="3" width="8" height="8" rx="4" fill="none" stroke="#222" stroke-width=".9"/><rect x="10.300" y="4.800" width="4.400" height="4.400" rx="2.200" fill="none" stroke="#222" stroke-width=".7"/></svg>
<svg class="a" style="left:10px;top:174.5px" width="19" height="14" viewBox="0 0 19 14"><path d="M8 3.500A3.800 3.800 0 1 0 8 10.500M6.500 5.200A2 2 0 1 0 6.500 8.800M11 3.500A3.800 3.800 0 1 1 11 10.500M12.500 5.200A2 2 0 1 1 12.500 8.800" fill="none" stroke="#222" stroke-width=".85"/><path d="M9.500 1.500v3M9.500 9.500v3" stroke="#222" stroke-width=".7"/></svg>
<svg class="a" style="left:10px;top:188.5px" width="19" height="14" viewBox="0 0 19 14"><circle cx="14" cy="4.200" r="1.900" fill="none" stroke="#111" stroke-width=".9"/><circle cx="14" cy="9.800" r="1.900" fill="none" stroke="#111" stroke-width=".9"/><path d="M12.300 5.200L4 9.500M12.300 8.800L4 4.500" stroke="#111" stroke-width="1"/></svg>
<svg class="a" style="left:10px;top:202.5px" width="19" height="14" viewBox="0 0 19 14"><path d="M9.5 1.500l1.600 3.600 3.900.400-2.900 2.600.800 3.900-3.400-2-3.400 2 .800-3.900-2.900-2.600 3.900-.400z" fill="none" stroke="#222" stroke-width=".9"/></svg>
<!-- menu bar -->
<div class="a" style="left:0;top:0;width:700px;height:15px;background:linear-gradient(#fbfbfb,#eeeeee);border-bottom:1px solid #c8c8c8"></div>
<div class="a" style="left:0;top:0;width:4px;height:4px;background:radial-gradient(circle at 4px 4px,transparent 3.5px,#000 4px)"></div>
<div class="a" style="left:696px;top:0;width:4px;height:4px;background:radial-gradient(circle at 0 4px,transparent 3.5px,#000 4px)"></div>
<svg class="a" style="left:13px;top:1px" width="11" height="12" viewBox="0 0 11 12"><defs><linearGradient id="ap" x1="0" y1="0" x2="0" y2="1"><stop offset="0" stop-color="#5fc0f0"/><stop offset="1" stop-color="#1f86d0"/></linearGradient></defs><path d="M8.2 6.3c0-1.5 1.2-2.2 1.3-2.3-.7-1-1.8-1.2-2.2-1.2-.9-.1-1.8.5-2.3.5s-1.2-.5-2-.5C1.9 2.9.2 3.9.2 6.3c0 2.4 1.7 5.5 3 5.5.6 0 1-.4 1.8-.4s1.1.4 1.8.4c1.3 0 2.3-2.3 2.6-3.2-1.2-.5-1.2-2.1-1.2-2.3zM6.9 1.9c.4-.5.7-1.1.6-1.8-.6 0-1.3.4-1.7.9-.4.4-.7 1.100-.6 1.7.7.1 1.300-.3 1.7-.8z" fill="url(#ap)"/></svg>
<div class="t" style="left:38px;top:3px;font-size:10px;font-weight:bold;color:#111">QuarkXPress</div>
<div class="t" style="left:113px;top:3px;font-size:9.7px;color:#a4a4a4">File</div>
<div class="t" style="left:142px;top:3px;font-size:9.7px;color:#a4a4a4">Edit</div>
<div class="t" style="left:171px;top:3px;font-size:9.7px;color:#a4a4a4">Style</div>
<div class="t" style="left:206px;top:3px;font-size:9.7px;color:#a4a4a4;letter-spacing:.2px">Item</div>
<div class="t" style="left:239px;top:3px;font-size:9.7px;color:#a4a4a4">Page</div>
<div class="t" style="left:274px;top:3px;font-size:9.7px;color:#a4a4a4">Layout</div>
<div class="t" style="left:318px;top:3px;font-size:9.7px;color:#a4a4a4">View</div>
<div class="t" style="left:351px;top:3px;font-size:9.7px;color:#a4a4a4;letter-spacing:.4px">Utilities</div>
<div class="t" style="left:399px;top:3px;font-size:9.7px;color:#a4a4a4;letter-spacing:.2px">Window</div>
<svg class="a" style="left:449px;top:2px" width="9" height="11" viewBox="0 0 9 11"><path d="M6.5 1.2C5 .3 2.2 1 2.3 2.8c.1 1.5 3.2 1.8 3.3 3.6.1 1.7-2.700 2.4-4 1.200M1.6 7.6l1.2 2.4M7.2 1.5l-1 -1" stroke="#333" stroke-width="1.2" fill="none"/></svg>
<div class="t" style="left:472px;top:3px;font-size:9.7px;color:#a4a4a4">Help</div>
<svg class="a" style="left:547px;top:1px" width="14" height="13" viewBox="0 0 14 13"><path d="M7 1L8.5 4 12 3 10.5 6 13 8 9.500 8.500 8 12 7 9.500 6 12 4.500 8.500 1 8 3.500 6 2 3 5.500 4z" fill="#2f9a4a"/><path d="M7 5v7" stroke="#1c6a30" stroke-width=".8"/></svg>
<svg class="a" style="left:570px;top:3px" width="7" height="9" viewBox="0 0 7 9"><path d="M0 3h2l4-3v9L2 6H0z" fill="#222"/></svg>
<svg class="a" style="left:591px;top:3px" width="12" height="9" viewBox="0 0 12 9"><rect width="12" height="9" fill="#e8e8f0"/><rect y="0" width="12" height="1.3" fill="#d03838"/><rect y="2.6" width="12" height="1.3" fill="#d03838"/><rect y="5.2" width="12" height="1.3" fill="#d03838"/><rect y="7.7" width="12" height="1.3" fill="#d03838"/><rect width="5.5" height="4.6" fill="#4050a8"/></svg>
<div class="t" style="left:611px;top:3px;font-size:10.1px;color:#111">Wed 2:55:18 PM</div>

<!-- Dialog -->
<div class="a" id="dlg" style="left:40px;top:33px;width:539px;height:456px;background:#efefef;border-radius:4px 4px 0 0;box-shadow:0 4px 10px rgba(0,0,0,.75);overflow:visible">
<div class="a" style="left:0px;top:15px;width:539px;height:441px;background:repeating-linear-gradient(#f1f1f1 0,#f1f1f1 1.5px,#ededed 1.5px,#ededed 3px)"></div>
<div class="a" style="left:0px;top:0px;width:539px;height:15px;background:linear-gradient(#f4f4f4,#e8e8e8 50%,#e0e0e0);border-radius:4px 4px 0 0;border-bottom:1px solid #a4a4a4"></div>
<div class="t" style="left:253.7px;top:3.57px;font-size:9.2px;letter-spacing:-0.301px;color:#1a1a1a">Save as</div>
<div class="t" style="left:146.5px;top:33.85px;font-size:8.6px;letter-spacing:-0.060px;color:#222">Save As:</div>
<div class="a" style="left:186px;top:30px;width:171px;height:14.5px;background:#fff;border:1px solid #9a9a9a;border-top-color:#7a7a7a;box-shadow:inset 0 1px 1px rgba(0,0,0,.15)"></div>
<div class="t" style="left:189px;top:33.57px;font-size:9.2px;letter-spacing:0.103px;color:#111">JVListingSheet.qxp</div>
<div class="a" style="left:363px;top:30px;width:15px;height:14px;border-radius:3px;border:1px solid #3d6ea8;background:linear-gradient(#cfe8fb,#8cc6f2 50%,#5aa9ea 51%,#a8dcfb);box-shadow:0 1px 1px rgba(0,0,0,.2)"></div>
<svg class="a" style="left:366.5px;top:34.5px" width="8" height="5" viewBox="0 0 8 5"><path d="M4 0L8 5H0z" fill="#0b1a2e"/></svg>
<div class="a" style="left:0px;top:53px;width:539px;height:1px;background:#a9a9a9"></div>
<div class="a" style="left:0px;top:54px;width:539px;height:1px;background:#fafafa"></div>
<div class="a" style="left:7px;top:61px;width:34px;height:14.5px;border-radius:4px;border:1px solid #9c9c9c;background:linear-gradient(#ffffff,#f0f0f0 50%,#e4e4e4 51%,#f6f6f6)"></div>
<div class="a" style="left:23.5px;top:62px;width:1px;height:12.5px;background:#cacaca"></div>
<svg class="a" style="left:12.5px;top:64.8px" width="7" height="7" viewBox="0 0 7 7"><path d="M0 3.5L7 0v7z" fill="#555"/></svg>
<svg class="a" style="left:28.5px;top:64.8px" width="7" height="7" viewBox="0 0 7 7"><path d="M7 3.5L0 0v7z" fill="#b4b4b4"/></svg>
<div class="a" style="left:48px;top:61px;width:34px;height:14.5px;border-radius:4px;border:1px solid #8c8c8c;background:linear-gradient(#ffffff,#f0f0f0 50%,#e4e4e4 51%,#f6f6f6);overflow:hidden"></div>
<div class="a" style="left:64.2px;top:62px;width:16.8px;height:12.5px;border-radius:0 3px 3px 0;background:linear-gradient(#c9e6fb,#8ccaf3 50%,#63b2ee 51%,#b0e0fc)"></div>
<div class="a" style="left:64.2px;top:62px;width:1px;height:12.5px;background:#7a9ec0"></div>
<svg class="a" style="left:52px;top:64.5px" width="8" height="8" viewBox="0 0 8 8"><path d="M0 .5h8M0 2.5h8M0 4.5h8M0 6.5h8" stroke="#333" stroke-width="1"/></svg>
<svg class="a" style="left:68px;top:64.5px" width="9" height="8" viewBox="0 0 9 8"><rect x=".5" y=".5" width="8" height="7" fill="none" stroke="#0c2a50" stroke-width="1"/><path d="M3.2 .5v7M5.8 .5v7" stroke="#0c2a50" stroke-width="1"/></svg>
<div class="a" style="left:186px;top:61px;width:172px;height:15px;border-radius:4px;border:1px solid #9a9a9a;background:linear-gradient(#ffffff,#f2f2f2 50%,#e6e6e6 51%,#f8f8f8);overflow:hidden"></div>
<div class="a" style="left:344px;top:62px;width:13px;height:13px;border-radius:0 3px 3px 0;background:linear-gradient(#c9e6fb,#7fc0f0 50%,#4fa6ea 51%,#9ed8fb);border-left:1px solid #6a9bc8"></div>
<svg class="a" style="left:347px;top:64px" width="7" height="9" viewBox="0 0 7 9"><path d="M3.5 0L6.5 3.3H.5zM3.5 9L6.5 5.7H.5z" fill="#0b1a2e"/></svg>
<div class="a" style="left:193px;top:63.3px;width:10.5px;height:10.5px;border-radius:1.5px;background:linear-gradient(#d0d0d0,#a8a8a8)"></div>
<div class="a" style="left:193.8px;top:64px;width:9px;height:9px;border-radius:50%;background:radial-gradient(circle,#707070 12%,#d4d4d4 25%,#b4b4b4 50%,#e4e4e4 75%,#9a9a9a)"></div>
<div class="t" style="left:205.5px;top:64.15px;font-size:8.6px;letter-spacing:-0.141px;color:#111">MACWORK</div>
<div class="a" style="left:7px;top:81.2px;width:96px;height:257px;background:#fff;border:1.5px solid #a6c2e0"></div>
<div class="a" style="left:8px;top:145.1px;width:94.5px;height:18.9px;background:linear-gradient(#5a9ae4,#2a7ad8 8%,#1f70d0 60%,#1a68c6)"></div>
<div class="a" style="left:10px;top:169px;width:90px;height:2px;background:#d4d4d4"></div>
<div class="t" style="left:32px;top:89.75px;font-size:8.6px;letter-spacing:0.076px;color:#222">PHH Mortgage'...</div>
<div class="a" style="left:13.5px;top:86.4px;width:12.5px;height:10.5px;background:linear-gradient(#42a8ee,#1a78cc);border:1.5px solid #d4ecfa;border-radius:1.5px;box-shadow:0 0 0 .5px #8ab"></div>
<div class="a" style="left:14.5px;top:97.4px;width:10.5px;height:3.5px;background:linear-gradient(#f4f4f4,#c8c8c8);border-radius:0 0 5px 5px;border:.5px solid #999;border-top:none"></div>
<div class="t" style="left:32px;top:109.45px;font-size:8.6px;letter-spacing:0.094px;color:#222">iDisk</div>
<div class="a" style="left:12.5px;top:104.6px;width:14px;height:14px;border-radius:50%;background:radial-gradient(circle at 45% 35%,#e0f4ff,#4aa4e4 55%,#1a5898)"></div>
<div class="a" style="left:13.5px;top:117.6px;width:12px;height:3.5px;background:linear-gradient(#aaa,#666);border-radius:1px"></div>
<div class="t" style="left:32px;top:129.35px;font-size:8.6px;letter-spacing:-0.676px;color:#222">MKTGSTORED</div>
<div class="a" style="left:12px;top:126.0px;width:15px;height:15px;border-radius:2px;background:linear-gradient(#d8d8d8,#a0a0a0);opacity:.85"></div>
<div class="a" style="left:13px;top:127.0px;width:13px;height:13px;border-radius:50%;background:radial-gradient(circle at 50% 50%,#6a6a6a 10%,#d8d8d8 22%,#b0b0b0 45%,#e8e8e8 70%,#9a9a9a)"></div>
<div class="t" style="left:32px;top:149.85px;font-size:8.6px;letter-spacing:-0.757px;color:#fff">MACWORK</div>
<div class="a" style="left:12px;top:146.5px;width:15px;height:15px;border-radius:2px;background:linear-gradient(#d8d8d8,#a0a0a0);opacity:.85"></div>
<div class="a" style="left:13px;top:147.5px;width:13px;height:13px;border-radius:50%;background:radial-gradient(circle at 50% 50%,#6a6a6a 10%,#d8d8d8 22%,#b0b0b0 45%,#e8e8e8 70%,#9a9a9a)"></div>
<div class="t" style="left:32px;top:177.55px;font-size:8.6px;letter-spacing:0.111px;color:#222">Desktop</div>
<div class="a" style="left:11.5px;top:176.7px;width:17px;height:10px;background:linear-gradient(90deg,#4c8cd4,#2a6ab8);border:1px solid #5a7aa8"></div>
<div class="a" style="left:13px;top:178.2px;width:2px;height:7px;background:repeating-linear-gradient(#dde 0,#dde 1px,transparent 1px,transparent 2px)"></div>
<div class="t" style="left:32px;top:197.85px;font-size:8.6px;letter-spacing:0.178px;color:#222">Applications</div>
<svg class="a" style="left:11px;top:194px" width="17" height="15" viewBox="0 0 17 15"><path d="M8.5 1L2 14M8.5 1L15 14M1 9.5h15" stroke="#c88a4a" stroke-width="1.7" fill="none"/></svg>
<div class="t" style="left:32px;top:218.25px;font-size:8.6px;letter-spacing:0.091px;color:#222">Documents</div>
<div class="a" style="left:14px;top:213.4px;width:11px;height:15px;background:linear-gradient(#fcfcfc,#e0e0e0);border:1px solid #a0a0a0;border-radius:1px 4px 1px 1px"></div>
<div class="t" style="left:32px;top:238.05px;font-size:8.6px;letter-spacing:-0.047px;color:#222">Movies</div>
<div class="a" style="left:11.5px;top:238.2px;width:16px;height:10px;background:linear-gradient(#2a4a1a,#5a8a2a);border:1px solid #1a2a10"></div>
<div class="a" style="left:11.5px;top:235.2px;width:16px;height:2.5px;background:repeating-linear-gradient(90deg,#222 0,#222 2px,#ddd 2px,#ddd 4px);transform:rotate(-8deg)"></div>
<div class="t" style="left:32px;top:258.15px;font-size:8.6px;letter-spacing:-0.038px;color:#222">Music</div>
<svg class="a" style="left:12px;top:253.3px" width="14" height="17" viewBox="0 0 14 17"><path d="M7.5 16c-2 1-3-1-1.5-2s2 1 0 1.5M7 15.5L8 1c2 1 1 4-2 6-3 2-3 5 0 6s5-2 2-4-4 1-3 2" stroke="#444" stroke-width="1.1" fill="none"/></svg>
<div class="t" style="left:32px;top:278.65px;font-size:8.6px;letter-spacing:-0.021px;color:#222">Pictures</div>
<div class="a" style="left:12.5px;top:276.8px;width:15px;height:12px;background:linear-gradient(#f4f4f4,#c8c8c8);border:1px solid #8a8a8a;border-radius:2px"></div>
<div class="a" style="left:17px;top:274.8px;width:6px;height:3px;border:1px solid #888;border-bottom:none;border-radius:3px 3px 0 0"></div>
<div class="t" style="left:32px;top:298.45px;font-size:8.6px;letter-spacing:-0.091px;color:#222">Design SSi</div>
<svg class="a" style="left:12px;top:294.6px" width="16" height="15" viewBox="0 0 16 15"><defs><linearGradient id="fs" x1="0" y1="1" x2="1" y2="0"><stop offset="0" stop-color="#c8eefa"/><stop offset=".55" stop-color="#9ad4f4"/><stop offset="1" stop-color="#78b0e6"/></linearGradient></defs><path d="M1.5 3.5L4 1.5h11v10.5L13 14H1.5z" fill="url(#fs)"/><path d="M2 3v11" stroke="#7a8c98" stroke-width="1.3"/><path d="M2 3.5h11.500" stroke="#e6f6fc" stroke-width=".8"/><path d="M15 1.5v10.5" stroke="#6a98c8" stroke-width=".6"/></svg>
<div class="t" style="left:32px;top:318.55px;font-size:8.6px;letter-spacing:0.150px;color:#222">brand Logos</div>
<svg class="a" style="left:12px;top:314.7px" width="16" height="15" viewBox="0 0 16 15"><defs><linearGradient id="fs" x1="0" y1="1" x2="1" y2="0"><stop offset="0" stop-color="#c8eefa"/><stop offset=".55" stop-color="#9ad4f4"/><stop offset="1" stop-color="#78b0e6"/></linearGradient></defs><path d="M1.5 3.5L4 1.5h11v10.5L13 14H1.5z" fill="url(#fs)"/><path d="M2 3v11" stroke="#7a8c98" stroke-width="1.3"/><path d="M2 3.5h11.500" stroke="#e6f6fc" stroke-width=".8"/><path d="M15 1.5v10.5" stroke="#6a98c8" stroke-width=".6"/></svg>
<div class="a" style="left:104.5px;top:208.5px;width:2.5px;height:2.5px;background:#444;border-radius:1px"></div>
<div class="a" style="left:109px;top:81.2px;width:422px;height:256px;background:#fff;border:1px solid #c8c8c8;border-bottom-color:#d4d4d4"></div>
<div class="a" style="left:110px;top:82.2px;width:130px;height:244.8px;overflow:hidden">
<div class="a" style="left:15.9px;top:2.8px;width:102.4px;height:10.5px;border-radius:5.5px;background:linear-gradient(#f8aaa6,#ef7d78)"></div>
<svg class="a" style="left:3.3px;top:2.3px" width="11" height="11" viewBox="0 0 11 11"><defs><linearGradient id="ff" x1="0" y1="1" x2="1" y2="0"><stop offset="0" stop-color="#d4f2fa"/><stop offset=".5" stop-color="#a8dcf4"/><stop offset="1" stop-color="#86b8ea"/></linearGradient></defs><path d="M1 2h2.5l1-1H10v9H1z" fill="url(#ff)"/><path d="M1.2 1.5v9" stroke="#6f8a98" stroke-width="1.2"/><path d="M1 2.5h9" stroke="#e8f6fc" stroke-width=".8"/></svg>
<div class="t" style="left:19px;top:3.8px;font-size:8.3px;letter-spacing:0.042px;color:#1a1a1a">_DOC REN ...keting Jobs</div>
<svg class="a" style="left:120.5px;top:4.8px" width="5" height="6" viewBox="0 0 5 6"><path d="M0 0L5 3 0 6z" fill="#b8b8b8"/></svg>
<svg class="a" style="left:3.3px;top:15.25px" width="11" height="11" viewBox="0 0 11 11"><defs><linearGradient id="ff" x1="0" y1="1" x2="1" y2="0"><stop offset="0" stop-color="#d4f2fa"/><stop offset=".5" stop-color="#a8dcf4"/><stop offset="1" stop-color="#86b8ea"/></linearGradient></defs><path d="M1 2h2.5l1-1H10v9H1z" fill="url(#ff)"/><path d="M1.2 1.5v9" stroke="#6f8a98" stroke-width="1.2"/><path d="M1 2.5h9" stroke="#e8f6fc" stroke-width=".8"/></svg>
<svg class="a" style="left:2.5px;top:21.75px" width="5" height="5" viewBox="0 0 5 5"><path d="M0 0h5v5H0z" fill="#111"/><path d="M1 4L4 1" stroke="#fff" stroke-width=".8"/></svg>
<div class="t" style="left:19px;top:16.75px;font-size:8.3px;letter-spacing:-0.013px;color:#1a1a1a">_DOC REN ... Jobs alias</div>
<svg class="a" style="left:120.5px;top:17.75px" width="5" height="6" viewBox="0 0 5 6"><path d="M0 0L5 3 0 6z" fill="#b8b8b8"/></svg>
<svg class="a" style="left:3.3px;top:28.2px" width="11" height="11" viewBox="0 0 11 11"><defs><linearGradient id="ff" x1="0" y1="1" x2="1" y2="0"><stop offset="0" stop-color="#d4f2fa"/><stop offset=".5" stop-color="#a8dcf4"/><stop offset="1" stop-color="#86b8ea"/></linearGradient></defs><path d="M1 2h2.5l1-1H10v9H1z" fill="url(#ff)"/><path d="M1.2 1.5v9" stroke="#6f8a98" stroke-width="1.2"/><path d="M1 2.5h9" stroke="#e8f6fc" stroke-width=".8"/></svg>
<div class="t" style="left:19px;top:29.7px;font-size:8.3px;letter-spacing:-0.385px;color:#1a1a1a">CAREER_GEAR_2004</div>
<svg class="a" style="left:120.5px;top:30.7px" width="5" height="6" viewBox="0 0 5 6"><path d="M0 0L5 3 0 6z" fill="#b8b8b8"/></svg>
<svg class="a" style="left:3.3px;top:41.15px" width="11" height="11" viewBox="0 0 11 11"><defs><linearGradient id="ff" x1="0" y1="1" x2="1" y2="0"><stop offset="0" stop-color="#d4f2fa"/><stop offset=".5" stop-color="#a8dcf4"/><stop offset="1" stop-color="#86b8ea"/></linearGradient></defs><path d="M1 2h2.5l1-1H10v9H1z" fill="url(#ff)"/><path d="M1.2 1.5v9" stroke="#6f8a98" stroke-width="1.2"/><path d="M1 2.5h9" stroke="#e8f6fc" stroke-width=".8"/></svg>
<div class="t" style="left:19px;top:42.65px;font-size:8.3px;letter-spacing:-0.315px;color:#1a1a1a">CHARITY GOLF CLASSIC</div>
<svg class="a" style="left:120.5px;top:43.65px" width="5" height="6" viewBox="0 0 5 6"><path d="M0 0L5 3 0 6z" fill="#b8b8b8"/></svg>
<svg class="a" style="left:3.3px;top:54.1px" width="11" height="11" viewBox="0 0 11 11"><defs><linearGradient id="ff" x1="0" y1="1" x2="1" y2="0"><stop offset="0" stop-color="#d4f2fa"/><stop offset=".5" stop-color="#a8dcf4"/><stop offset="1" stop-color="#86b8ea"/></linearGradient></defs><path d="M1 2h2.5l1-1H10v9H1z" fill="url(#ff)"/><path d="M1.2 1.5v9" stroke="#6f8a98" stroke-width="1.2"/><path d="M1 2.5h9" stroke="#e8f6fc" stroke-width=".8"/></svg>
<div class="t" style="left:19px;top:55.6px;font-size:8.3px;letter-spacing:-0.413px;color:#1a1a1a">CLIENT_FORUM</div>
<svg class="a" style="left:120.5px;top:56.6px" width="5" height="6" viewBox="0 0 5 6"><path d="M0 0L5 3 0 6z" fill="#b8b8b8"/></svg>
<div class="a" style="left:15.9px;top:67.55px;width:102.4px;height:10.5px;border-radius:5.5px;background:linear-gradient(#dfc8f0,#c6a3e2)"></div>
<svg class="a" style="left:3.3px;top:67.05px" width="11" height="11" viewBox="0 0 11 11"><defs><linearGradient id="ff" x1="0" y1="1" x2="1" y2="0"><stop offset="0" stop-color="#d4f2fa"/><stop offset=".5" stop-color="#a8dcf4"/><stop offset="1" stop-color="#86b8ea"/></linearGradient></defs><path d="M1 2h2.5l1-1H10v9H1z" fill="url(#ff)"/><path d="M1.2 1.5v9" stroke="#6f8a98" stroke-width="1.2"/><path d="M1 2.5h9" stroke="#e8f6fc" stroke-width=".8"/></svg>
<div class="t" style="left:19px;top:68.55px;font-size:8.3px;letter-spacing:0.238px;color:#1a1a1a">Collateral Photos</div>
<svg class="a" style="left:120.5px;top:69.55px" width="5" height="6" viewBox="0 0 5 6"><path d="M0 0L5 3 0 6z" fill="#b8b8b8"/></svg>
<div class="a" style="left:15.9px;top:80.5px;width:102.4px;height:10.5px;border-radius:5.5px;background:linear-gradient(#e2f4a8,#c4e46e)"></div>
<svg class="a" style="left:3.3px;top:80.0px" width="11" height="11" viewBox="0 0 11 11"><defs><linearGradient id="ff" x1="0" y1="1" x2="1" y2="0"><stop offset="0" stop-color="#d4f2fa"/><stop offset=".5" stop-color="#a8dcf4"/><stop offset="1" stop-color="#86b8ea"/></linearGradient></defs><path d="M1 2h2.5l1-1H10v9H1z" fill="url(#ff)"/><path d="M1.2 1.5v9" stroke="#6f8a98" stroke-width="1.2"/><path d="M1 2.5h9" stroke="#e8f6fc" stroke-width=".8"/></svg>
<div class="t" style="left:19px;top:81.5px;font-size:8.3px;letter-spacing:0.146px;color:#1a1a1a">Design_Co...t_Requests</div>
<svg class="a" style="left:120.5px;top:82.5px" width="5" height="6" viewBox="0 0 5 6"><path d="M0 0L5 3 0 6z" fill="#b8b8b8"/></svg>
<svg class="a" style="left:3.3px;top:92.95px" width="11" height="11" viewBox="0 0 11 11"><defs><linearGradient id="ff" x1="0" y1="1" x2="1" y2="0"><stop offset="0" stop-color="#d4f2fa"/><stop offset=".5" stop-color="#a8dcf4"/><stop offset="1" stop-color="#86b8ea"/></linearGradient></defs><path d="M1 2h2.5l1-1H10v9H1z" fill="url(#ff)"/><path d="M1.2 1.5v9" stroke="#6f8a98" stroke-width="1.2"/><path d="M1 2.5h9" stroke="#e8f6fc" stroke-width=".8"/></svg>
<div class="t" style="left:19px;top:94.45px;font-size:8.3px;letter-spacing:0.254px;color:#1a1a1a">Diversity conference</div>
<svg class="a" style="left:120.5px;top:95.45px" width="5" height="6" viewBox="0 0 5 6"><path d="M0 0L5 3 0 6z" fill="#b8b8b8"/></svg>
<svg class="a" style="left:3.3px;top:105.9px" width="11" height="11" viewBox="0 0 11 11"><defs><linearGradient id="ff" x1="0" y1="1" x2="1" y2="0"><stop offset="0" stop-color="#d4f2fa"/><stop offset=".5" stop-color="#a8dcf4"/><stop offset="1" stop-color="#86b8ea"/></linearGradient></defs><path d="M1 2h2.5l1-1H10v9H1z" fill="url(#ff)"/><path d="M1.2 1.5v9" stroke="#6f8a98" stroke-width="1.2"/><path d="M1 2.5h9" stroke="#e8f6fc" stroke-width=".8"/></svg>
<div class="t" style="left:19px;top:107.4px;font-size:8.3px;letter-spacing:0.375px;color:#1a1a1a">Go thumbnails</div>
<svg class="a" style="left:120.5px;top:108.4px" width="5" height="6" viewBox="0 0 5 6"><path d="M0 0L5 3 0 6z" fill="#b8b8b8"/></svg>
<svg class="a" style="left:3.3px;top:118.85px" width="11" height="11" viewBox="0 0 11 11"><defs><linearGradient id="ff" x1="0" y1="1" x2="1" y2="0"><stop offset="0" stop-color="#d4f2fa"/><stop offset=".5" stop-color="#a8dcf4"/><stop offset="1" stop-color="#86b8ea"/></linearGradient></defs><path d="M1 2h2.5l1-1H10v9H1z" fill="url(#ff)"/><path d="M1.2 1.5v9" stroke="#6f8a98" stroke-width="1.2"/><path d="M1 2.5h9" stroke="#e8f6fc" stroke-width=".8"/></svg>
<div class="t" style="left:19px;top:120.35px;font-size:8.3px;letter-spacing:-0.152px;color:#1a1a1a">HR DIVERS... CAMPAIGN</div>
<svg class="a" style="left:120.5px;top:121.35px" width="5" height="6" viewBox="0 0 5 6"><path d="M0 0L5 3 0 6z" fill="#b8b8b8"/></svg>
<svg class="a" style="left:3.3px;top:131.8px" width="11" height="11" viewBox="0 0 11 11"><defs><linearGradient id="ff" x1="0" y1="1" x2="1" y2="0"><stop offset="0" stop-color="#d4f2fa"/><stop offset=".5" stop-color="#a8dcf4"/><stop offset="1" stop-color="#86b8ea"/></linearGradient></defs><path d="M1 2h2.5l1-1H10v9H1z" fill="url(#ff)"/><path d="M1.2 1.5v9" stroke="#6f8a98" stroke-width="1.2"/><path d="M1 2.5h9" stroke="#e8f6fc" stroke-width=".8"/></svg>
<div class="t" style="left:19px;top:133.3px;font-size:8.3px;letter-spacing:-0.800px;color:#1a1a1a">JDRF</div>
<svg class="a" style="left:120.5px;top:134.3px" width="5" height="6" viewBox="0 0 5 6"><path d="M0 0L5 3 0 6z" fill="#b8b8b8"/></svg>
<svg class="a" style="left:3.3px;top:144.75px" width="11" height="11" viewBox="0 0 11 11"><defs><linearGradient id="ff" x1="0" y1="1" x2="1" y2="0"><stop offset="0" stop-color="#d4f2fa"/><stop offset=".5" stop-color="#a8dcf4"/><stop offset="1" stop-color="#86b8ea"/></linearGradient></defs><path d="M1 2h2.5l1-1H10v9H1z" fill="url(#ff)"/><path d="M1.2 1.5v9" stroke="#6f8a98" stroke-width="1.2"/><path d="M1 2.5h9" stroke="#e8f6fc" stroke-width=".8"/></svg>
<div class="t" style="left:19px;top:146.25px;font-size:8.3px;letter-spacing:-0.264px;color:#1a1a1a">MAC SPEC ...TEMPLATES</div>
<svg class="a" style="left:120.5px;top:147.25px" width="5" height="6" viewBox="0 0 5 6"><path d="M0 0L5 3 0 6z" fill="#b8b8b8"/></svg>
<svg class="a" style="left:3.3px;top:157.7px" width="11" height="11" viewBox="0 0 11 11"><defs><linearGradient id="ff" x1="0" y1="1" x2="1" y2="0"><stop offset="0" stop-color="#d4f2fa"/><stop offset=".5" stop-color="#a8dcf4"/><stop offset="1" stop-color="#86b8ea"/></linearGradient></defs><path d="M1 2h2.5l1-1H10v9H1z" fill="url(#ff)"/><path d="M1.2 1.5v9" stroke="#6f8a98" stroke-width="1.2"/><path d="M1 2.5h9" stroke="#e8f6fc" stroke-width=".8"/></svg>
<div class="t" style="left:19px;top:159.2px;font-size:8.3px;letter-spacing:0.202px;color:#1a1a1a">Marketing ...Spec Sheet</div>
<svg class="a" style="left:120.5px;top:160.2px" width="5" height="6" viewBox="0 0 5 6"><path d="M0 0L5 3 0 6z" fill="#b8b8b8"/></svg>
<svg class="a" style="left:3.3px;top:170.65px" width="11" height="11" viewBox="0 0 11 11"><defs><linearGradient id="ff" x1="0" y1="1" x2="1" y2="0"><stop offset="0" stop-color="#d4f2fa"/><stop offset=".5" stop-color="#a8dcf4"/><stop offset="1" stop-color="#86b8ea"/></linearGradient></defs><path d="M1 2h2.5l1-1H10v9H1z" fill="url(#ff)"/><path d="M1.2 1.5v9" stroke="#6f8a98" stroke-width="1.2"/><path d="M1 2.5h9" stroke="#e8f6fc" stroke-width=".8"/></svg>
<div class="t" style="left:19px;top:172.15px;font-size:8.3px;letter-spacing:0.076px;color:#1a1a1a">MARKETIN...OBS_0-999</div>
<svg class="a" style="left:120.5px;top:173.15px" width="5" height="6" viewBox="0 0 5 6"><path d="M0 0L5 3 0 6z" fill="#b8b8b8"/></svg>
<svg class="a" style="left:3.3px;top:183.6px" width="11" height="11" viewBox="0 0 11 11"><defs><linearGradient id="ff" x1="0" y1="1" x2="1" y2="0"><stop offset="0" stop-color="#d4f2fa"/><stop offset=".5" stop-color="#a8dcf4"/><stop offset="1" stop-color="#86b8ea"/></linearGradient></defs><path d="M1 2h2.5l1-1H10v9H1z" fill="url(#ff)"/><path d="M1.2 1.5v9" stroke="#6f8a98" stroke-width="1.2"/><path d="M1 2.5h9" stroke="#e8f6fc" stroke-width=".8"/></svg>
<div class="t" style="left:19px;top:185.1px;font-size:8.3px;letter-spacing:0.291px;color:#1a1a1a">MARKETIN...1000-1999</div>
<svg class="a" style="left:120.5px;top:186.1px" width="5" height="6" viewBox="0 0 5 6"><path d="M0 0L5 3 0 6z" fill="#b8b8b8"/></svg>
<svg class="a" style="left:3.3px;top:196.55px" width="11" height="11" viewBox="0 0 11 11"><defs><linearGradient id="ff" x1="0" y1="1" x2="1" y2="0"><stop offset="0" stop-color="#d4f2fa"/><stop offset=".5" stop-color="#a8dcf4"/><stop offset="1" stop-color="#86b8ea"/></linearGradient></defs><path d="M1 2h2.5l1-1H10v9H1z" fill="url(#ff)"/><path d="M1.2 1.5v9" stroke="#6f8a98" stroke-width="1.2"/><path d="M1 2.5h9" stroke="#e8f6fc" stroke-width=".8"/></svg>
<div class="t" style="left:19px;top:198.05px;font-size:8.3px;letter-spacing:0.291px;color:#1a1a1a">MARKETIN...2000-2999</div>
<svg class="a" style="left:120.5px;top:199.05px" width="5" height="6" viewBox="0 0 5 6"><path d="M0 0L5 3 0 6z" fill="#b8b8b8"/></svg>
<svg class="a" style="left:3.3px;top:209.5px" width="11" height="11" viewBox="0 0 11 11"><defs><linearGradient id="ff" x1="0" y1="1" x2="1" y2="0"><stop offset="0" stop-color="#d4f2fa"/><stop offset=".5" stop-color="#a8dcf4"/><stop offset="1" stop-color="#86b8ea"/></linearGradient></defs><path d="M1 2h2.5l1-1H10v9H1z" fill="url(#ff)"/><path d="M1.2 1.5v9" stroke="#6f8a98" stroke-width="1.2"/><path d="M1 2.5h9" stroke="#e8f6fc" stroke-width=".8"/></svg>
<div class="t" style="left:19px;top:211.0px;font-size:8.3px;letter-spacing:0.291px;color:#1a1a1a">MARKETIN...3000-3999</div>
<svg class="a" style="left:120.5px;top:212.0px" width="5" height="6" viewBox="0 0 5 6"><path d="M0 0L5 3 0 6z" fill="#b8b8b8"/></svg>
<svg class="a" style="left:3.3px;top:222.45px" width="11" height="11" viewBox="0 0 11 11"><defs><linearGradient id="ff" x1="0" y1="1" x2="1" y2="0"><stop offset="0" stop-color="#d4f2fa"/><stop offset=".5" stop-color="#a8dcf4"/><stop offset="1" stop-color="#86b8ea"/></linearGradient></defs><path d="M1 2h2.5l1-1H10v9H1z" fill="url(#ff)"/><path d="M1.2 1.5v9" stroke="#6f8a98" stroke-width="1.2"/><path d="M1 2.5h9" stroke="#e8f6fc" stroke-width=".8"/></svg>
<div class="t" style="left:19px;top:223.95px;font-size:8.3px;letter-spacing:0.291px;color:#1a1a1a">MARKETIN...4000-4999</div>
<svg class="a" style="left:120.5px;top:224.95px" width="5" height="6" viewBox="0 0 5 6"><path d="M0 0L5 3 0 6z" fill="#b8b8b8"/></svg>
<svg class="a" style="left:3.3px;top:235.4px" width="11" height="11" viewBox="0 0 11 11"><defs><linearGradient id="ff" x1="0" y1="1" x2="1" y2="0"><stop offset="0" stop-color="#d4f2fa"/><stop offset=".5" stop-color="#a8dcf4"/><stop offset="1" stop-color="#86b8ea"/></linearGradient></defs><path d="M1 2h2.5l1-1H10v9H1z" fill="url(#ff)"/><path d="M1.2 1.5v9" stroke="#6f8a98" stroke-width="1.2"/><path d="M1 2.5h9" stroke="#e8f6fc" stroke-width=".8"/></svg>
<div class="t" style="left:19px;top:236.9px;font-size:8.3px;letter-spacing:0.564px;color:#1a1a1a">Marketing ...000-5999</div>
<svg class="a" style="left:120.5px;top:237.9px" width="5" height="6" viewBox="0 0 5 6"><path d="M0 0L5 3 0 6z" fill="#b8b8b8"/></svg>
</div>
<div class="a" style="left:240px;top:82.2px;width:10.5px;height:245px;background:linear-gradient(90deg,#e6e6e6,#fafafa 30%,#f8f8f8 70%,#e2e2e2)"></div>
<div class="a" style="left:240.3px;top:86.5px;width:9.2px;height:126px;border-radius:4.6px;background:linear-gradient(90deg,#2f7fd0,#74c2f4 30%,#9ad8fa 50%,#70c0f2 72%,#2f78c8);border:.5px solid #2a5f9e"></div>
<div class="a" style="left:240px;top:302px;width:10.5px;height:25px;background:linear-gradient(90deg,#e6e6e6,#fafafa,#e2e2e2);border-top:1px solid #bcbcbc"></div>
<div class="a" style="left:240px;top:314px;width:10.5px;height:1px;background:#c8c8c8"></div>
<svg class="a" style="left:242.8px;top:306.5px" width="5" height="17" viewBox="0 0 5 17"><path d="M2.5 0L5 4H0zM2.5 17L5 13H0z" fill="#222"/></svg>
<div class="a" style="left:250.5px;top:82.2px;width:2px;height:245px;background:linear-gradient(90deg,#e4e4e4,#f6f6f6)"></div>
<div class="a" style="left:380px;top:82.2px;width:6px;height:245px;background:linear-gradient(90deg,#d0d0d0,#ececec 40%,#fafafa)"></div>
<div class="a" style="left:522px;top:82.2px;width:8.5px;height:245px;background:linear-gradient(90deg,#d4d4d4,#f6f6f6 50%,#ebebeb)"></div>
<div class="a" style="left:110px;top:327px;width:420px;height:9.5px;background:linear-gradient(#fafafa,#f2f2f2);border-top:1px solid #d4d4d4"></div>
<div class="a" style="left:522px;top:327px;width:8.5px;height:9.5px;background:#e8e8e8"></div>
<div class="a" style="left:7.5px;top:344.5px;width:524px;height:80px;background:#dfdfdf;border:1px solid #cbcbcb;border-top-color:#bdbdbd;border-radius:4px"></div>
<div class="t" style="left:105.5px;top:352.26px;font-size:8.8px;letter-spacing:0.208px;color:#222">Version:</div>
<div class="t" style="left:106px;top:373.66px;font-size:8.8px;letter-spacing:0.059px;color:#222">Type:</div>
<div class="a" style="left:147px;top:349.5px;width:104px;height:14.5px;border-radius:4px;border:1px solid #9a9a9a;background:linear-gradient(#ffffff,#f2f2f2 50%,#e6e6e6 51%,#f8f8f8);overflow:hidden"></div>
<div class="a" style="left:240.5px;top:350.5px;width:9.5px;height:12.5px;border-radius:0 3px 3px 0;background:linear-gradient(#c9e6fb,#7fc0f0 50%,#4fa6ea 51%,#9ed8fb);border-left:1px solid #6a9bc8"></div>
<svg class="a" style="left:242.3px;top:352.3px" width="6" height="9" viewBox="0 0 6 9"><path d="M3 0L5.8 3.3H.2zM3 9L5.8 5.7H.2z" fill="#0b1a2e"/></svg>
<div class="a" style="left:147px;top:371px;width:104px;height:14.5px;border-radius:4px;border:1px solid #9a9a9a;background:linear-gradient(#ffffff,#f2f2f2 50%,#e6e6e6 51%,#f8f8f8);overflow:hidden"></div>
<div class="a" style="left:240.5px;top:372px;width:9.5px;height:12.5px;border-radius:0 3px 3px 0;background:linear-gradient(#c9e6fb,#7fc0f0 50%,#4fa6ea 51%,#9ed8fb);border-left:1px solid #6a9bc8"></div>
<svg class="a" style="left:242.3px;top:373.8px" width="6" height="9" viewBox="0 0 6 9"><path d="M3 0L5.8 3.3H.2zM3 9L5.8 5.7H.2z" fill="#0b1a2e"/></svg>
<div class="t" style="left:155.7px;top:373.56px;font-size:9px;letter-spacing:0.097px;color:#111">Project</div>
<div class="a" style="left:107px;top:389.5px;width:11px;height:11px;border-radius:2px;border:1px solid #4a77a8;background:linear-gradient(#cfe8fb,#7fc0f0 50%,#55a8ea 51%,#a8dcfb)"></div>
<svg class="a" style="left:107px;top:388px" width="11" height="12" viewBox="0 0 11 12"><path d="M2.2 6.5L4.5 10 9.5 1.5" stroke="#0b1a2e" stroke-width="1.7" fill="none"/></svg>
<div class="t" style="left:119.4px;top:391.26px;font-size:9px;letter-spacing:0.154px;color:#222">Include Preview</div>
<div class="a" style="left:146px;top:334.5px;width:96px;height:30px;background:rgba(248,248,248,.97);box-shadow:0 3px 6px rgba(0,0,0,.5);border:1px solid #cfcfcf;border-top:none"></div>
<div class="t" style="left:156.6px;top:338.36px;font-size:9px;letter-spacing:0.800px;color:#222">5.0</div>
<div class="a" style="left:146px;top:349.5px;width:96px;height:12.5px;background:linear-gradient(#2a7fcc,#1066bc)"></div>
<svg class="a" style="left:147.5px;top:351.3px" width="8" height="9" viewBox="0 0 8 9"><path d="M1 5L3 8 7.2 1" stroke="#fff" stroke-width="1.6" fill="none"/></svg>
<div class="t" style="left:156.6px;top:351.26px;font-size:9px;letter-spacing:0.442px;color:#fff">6.0</div>
<div class="a" style="left:16px;top:434px;width:66px;height:15px;border-radius:7.5px;border:1px solid #8a8a8a;background:linear-gradient(#ffffff,#f0f0f0 50%,#e0e0e0 51%,#f8f8f8);box-shadow:0 1px 1px rgba(0,0,0,.2)"></div>
<div class="t" style="left:25.5px;top:436.77px;font-size:9.2px;letter-spacing:0.057px;color:#111">New Folder</div>
<div class="a" style="left:418px;top:434px;width:48px;height:15px;border-radius:7.5px;border:1px solid #8a8a8a;background:linear-gradient(#ffffff,#f0f0f0 50%,#e0e0e0 51%,#f8f8f8);box-shadow:0 1px 1px rgba(0,0,0,.2)"></div>
<div class="t" style="left:427.4px;top:436.77px;font-size:9.2px;letter-spacing:0.078px;color:#111">Cancel</div>
<div class="a" style="left:475px;top:434px;width:48px;height:15px;border-radius:7.5px;border:1px solid #2f5f9a;background:linear-gradient(#cdeafc,#84c8f5 50%,#5aaef0 51%,#a8e0fd);box-shadow:0 1px 1px rgba(0,0,0,.25)"></div>
<div class="t" style="left:489.8px;top:436.77px;font-size:9.2px;letter-spacing:-0.551px;color:#0a1a30">Save</div>
<svg class="a" style="left:527px;top:444px" width="11" height="11" viewBox="0 0 11 11"><path d="M10 2L2 10M10 5L5 10M10 8L8 10" stroke="#999" stroke-width=".8"/></svg>
</div>
</div>
</body></html>
